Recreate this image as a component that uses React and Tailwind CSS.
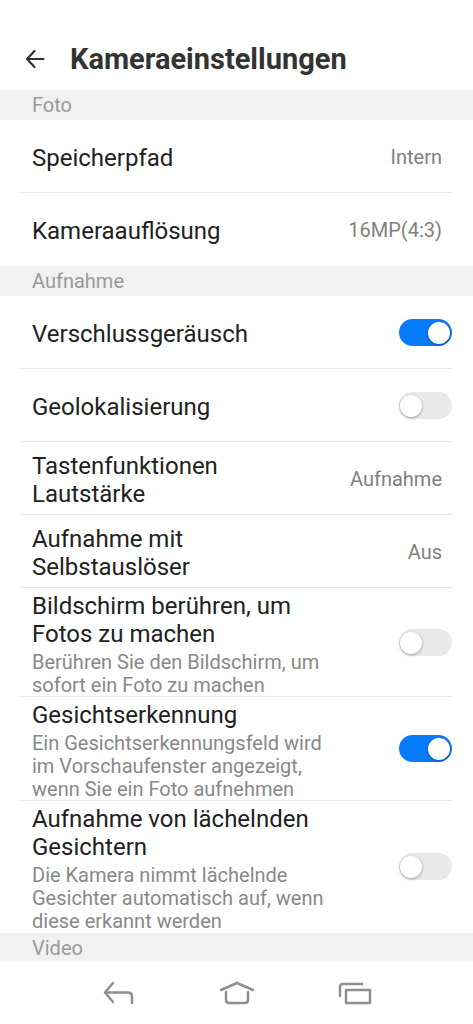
import React, { useState } from "react";

const sections = [
  {
    title: "Foto",
    items: [
      { id: "storage", label: "Speicherpfad", value: "Intern" },
      { id: "resolution", label: "Kameraauflösung", value: "16MP(4:3)" },
    ],
  },
  {
    title: "Aufnahme",
    items: [
      { id: "shutter", label: "Verschlussgeräusch", toggle: true },
      { id: "location", label: "Geolokalisierung", toggle: true },
      { id: "volume", label: "Tastenfunktionen Lautstärke", value: "Aufnahme" },
      { id: "timer", label: "Aufnahme mit Selbstauslöser", value: "Aus" },
      {
        id: "touch",
        label: "Bildschirm berühren, um Fotos zu machen",
        description: "Berühren Sie den Bildschirm, um sofort ein Foto zu machen",
        toggle: true,
      },
      {
        id: "face",
        label: "Gesichtserkennung",
        description:
          "Ein Gesichtserkennungsfeld wird im Vorschaufenster angezeigt, wenn Sie ein Foto aufnehmen",
        toggle: true,
      },
      {
        id: "smile",
        label: "Aufnahme von lächelnden Gesichtern",
        description:
          "Die Kamera nimmt lächelnde Gesichter automatisch auf, wenn diese erkannt werden",
        toggle: true,
      },
    ],
  },
];

const SectionTitle = ({ children }) => (
  <h2 className="bg-[#f1f1f1] pl-8 text-[20px] leading-[30px] text-[#999999]">
    {children}
  </h2>
);

const Toggle = ({ id, checked, onChange }) => (
  <span className="relative flex h-[27px] w-[53px] shrink-0">
    <input
      id={id}
      type="checkbox"
      role="switch"
      checked={checked}
      onChange={onChange}
      className="peer h-full w-full cursor-pointer appearance-none rounded-full bg-[#e9e9ea] checked:bg-[#067bfb]"
    />
    <span className="pointer-events-none absolute top-[3px] left-px size-[22px] rounded-full bg-white shadow-[0_1px_3px_rgba(0,0,0,0.35)] peer-checked:left-[29px]" />
  </span>
);

const Row = ({ item, checked, onToggle }) => {
  const text = (
    <span className="block w-[292px] pt-1">
      <span className="block text-[24px] leading-7 text-[#212121]">
        {item.label}
      </span>
      {item.description && (
        <span className="mt-[3px] -mb-px block text-[20px] leading-[23px] text-[#888888]">
          {item.description}
        </span>
      )}
    </span>
  );

  return (
    <li className="mx-[21px] border-b border-[#e6e6e6] last:border-transparent">
      {item.toggle ? (
        <label
          htmlFor={item.id}
          className="flex min-h-[72px] items-center justify-between pl-[11px]"
        >
          {text}
          <Toggle
            id={item.id}
            checked={checked}
            onChange={() => onToggle(item.id)}
          />
        </label>
      ) : (
        <button
          type="button"
          className="flex min-h-[72px] w-full items-center justify-between pr-[10px] pl-[11px] text-left"
        >
          {text}
          <span className="pt-0.5 text-[20px] text-[#808080]">
            {item.value}
          </span>
        </button>
      )}
    </li>
  );
};

const NavBar = () => (
  <nav className="flex h-[63px] shrink-0 items-center justify-between px-[100px] text-[#8f8f8f]">
    <button type="button" aria-label="Zurück">
      <svg width="36" height="30" viewBox="0 0 36 30" fill="none" stroke="currentColor" strokeWidth="2.5" strokeLinecap="round" strokeLinejoin="round">
        <path d="M13 5 5 14.500 13 24M5 14.500H28q4 0 4 4V25" />
      </svg>
    </button>
    <button type="button" aria-label="Startseite">
      <svg width="36" height="30" viewBox="0 0 36 30" fill="none" stroke="currentColor" strokeWidth="2.5" strokeLinecap="round" strokeLinejoin="round">
        <path d="M2 12 18 5 34 12M7 14V22q0 3 3 3H26q3 0 3-3V14" />
      </svg>
    </button>
    <button type="button" aria-label="Letzte Apps">
      <svg width="36" height="30" viewBox="0 0 36 30" fill="none" stroke="currentColor" strokeWidth="2.5" strokeLinecap="round" strokeLinejoin="round">
        <path d="M3 18V9q0-3 3-3H25" />
        <rect x="9" y="12" width="24" height="13" />
      </svg>
    </button>
  </nav>
);

const App = () => {
  const [enabled, setEnabled] = useState({ shutter: true, face: true });

  const handleToggle = (id) => {
    setEnabled((prev) => ({ ...prev, [id]: !prev[id] }));
  };

  return (
    <div className="flex h-screen flex-col bg-white font-[Roboto,sans-serif]">
      {/* Header */}
      <header className="flex h-[90px] shrink-0 items-center gap-6 pt-7 pl-6">
        <button type="button" aria-label="Zurück" className="text-[#303030]">
          <svg width="22" height="22" viewBox="0 0 22 22" fill="none" stroke="currentColor" strokeWidth="2.2" strokeLinecap="round" strokeLinejoin="round">
            <path d="M10.500 3 3 11 10.500 19M3 11H19.500" />
          </svg>
        </button>
        <h1 className="pt-0.5 text-[29px] font-bold text-[#333333]">
          Kameraeinstellungen
        </h1>
      </header>

      {/* Settings */}
      <main className="flex-1 overflow-y-auto [scrollbar-width:none]">
        {sections.map((section) => (
          <section key={section.title}>
            <SectionTitle>{section.title}</SectionTitle>
            <ul>
              {section.items.map((item) => (
                <Row
                  key={item.id}
                  item={item}
                  checked={!!enabled[item.id]}
                  onToggle={handleToggle}
                />
              ))}
            </ul>
          </section>
        ))}
        <SectionTitle>Video</SectionTitle>
      </main>

      <NavBar />
    </div>
  );
};

export default App;
